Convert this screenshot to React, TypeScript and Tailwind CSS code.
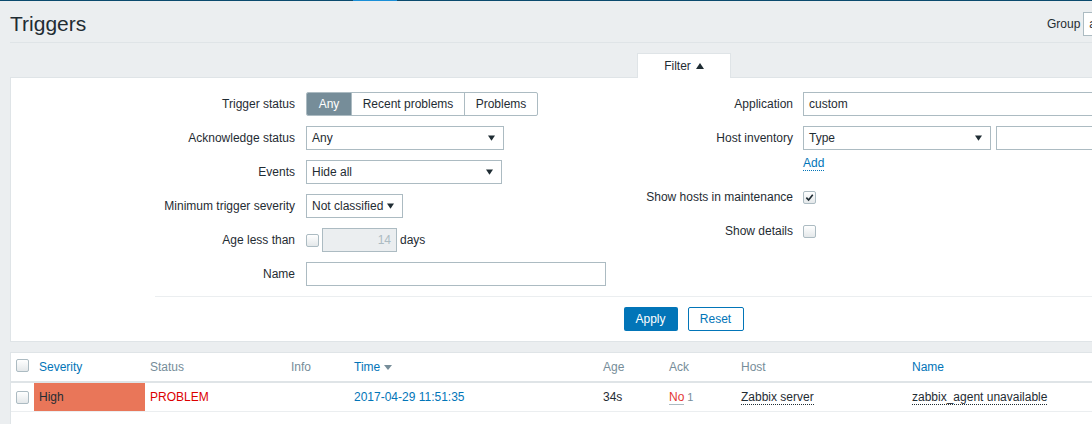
import React from "react";

function Checkbox({ checked = false }: { checked?: boolean }) {
  return (
    <span className="inline-flex h-[13px] w-[13px] items-center justify-center rounded-[2px] border border-[#acbbc2] bg-gradient-to-b from-[#ffffff] to-[#e4e8ea]">
      {checked && (
        <svg viewBox="0 0 10 10" className="h-[9px] w-[9px]">
          <path d="M1.5 5.2 L4 7.8 L8.6 2" fill="none" stroke="#1f2c33" strokeWidth="1.8" />
        </svg>
      )}
    </span>
  );
}

function Arrow() {
  return (
    <svg viewBox="0 0 8 6" className="h-[6px] w-[7px] shrink-0">
      <path d="M0 0 H8 L4 6 Z" fill="#1f2c33" />
    </svg>
  );
}

function Select({ value, width }: { value: string; width: string }) {
  return (
    <div className={`flex h-[24px] items-center justify-between border border-[#acbbc2] bg-white pl-[5px] pr-[8px] ${width}`}>
      <span>{value}</span>
      <Arrow />
    </div>
  );
}

function Row({ label, children }: { label: string; children: React.ReactNode }) {
  return (
    <div className="flex h-[34px] items-center">
      <div className="w-[285px] pr-[1px] text-right">{label}</div>
      <div className="ml-[10px] flex items-center">{children}</div>
    </div>
  );
}

function RRow({ label, children }: { label: string; children: React.ReactNode }) {
  return (
    <div className="flex h-[34px] items-center">
      <div className="w-[182px] text-right">{label}</div>
      <div className="ml-[10px] flex items-center">{children}</div>
    </div>
  );
}

export default function App() {
  return (
    <div className="h-[424px] w-[1092px] overflow-hidden bg-[#ebeef0] font-['Liberation_Sans',Arial,sans-serif] text-[12px] leading-[14px] text-[#1f2c33]">
      <div className="w-[1367px]">
        {/* top strip */}
        <div className="flex h-px bg-[#0a4a6e]">
          <div className="ml-[353px] w-[44px] bg-[#1a8fd8]" />
        </div>

        {/* header */}
        <div className="mx-[10px] flex h-[42px] items-center justify-between border-b border-[#dfe4e7] pt-[4px]">
          <h1 className="text-[21px] leading-[24px] text-[#1f2c33]">Triggers</h1>
          <div className="flex items-center">
            <span className="mr-[3px] text-[#1f2c33]">Group</span>
            <div className="flex h-[24px] w-[140px] items-center border border-[#acbbc2] bg-white px-[5px]">all</div>
            <span className="ml-[10px] mr-[3px]">Host</span>
            <div className="flex h-[24px] w-[96px] items-center border border-[#acbbc2] bg-white px-[5px]">all</div>
          </div>
        </div>

        {/* filter */}
        <div className="mx-[10px] mt-[10px]">
          <div className="flex justify-center">
            <div className="relative z-10 -mb-px flex h-[25px] w-[94px] items-center justify-center gap-[5px] border border-b-0 border-[#dfe4e7] bg-white pl-[1px]">
              <span>Filter</span>
              <svg viewBox="0 0 8 6" className="h-[6px] w-[8px]">
                <path d="M0 6 H8 L4 0 Z" fill="#1f2c33" />
              </svg>
            </div>
          </div>
          <div className="border border-[#dfe4e7] bg-white">
            <div className="flex pt-[9px] pb-[5px]">
              <div className="w-[600px]">
                <Row label="Trigger status">
                  <div className="flex h-[24px] overflow-hidden rounded-[2px] border border-[#acbbc2]">
                    <div className="flex w-[44px] items-center justify-center bg-[#768d99] text-white">Any</div>
                    <div className="flex w-[113px] items-center justify-center border-l border-[#acbbc2]">Recent problems</div>
                    <div className="flex w-[73px] items-center justify-center border-l border-[#acbbc2]">Problems</div>
                  </div>
                </Row>
                <Row label="Acknowledge status">
                  <Select value="Any" width="w-[198px]" />
                </Row>
                <Row label="Events">
                  <Select value="Hide all" width="w-[196px]" />
                </Row>
                <Row label="Minimum trigger severity">
                  <Select value="Not classified" width="w-[97px]" />
                </Row>
                <Row label="Age less than">
                  <Checkbox />
                  <div className="ml-[3px] flex h-[24px] w-[75px] items-center justify-end border border-[#acbbc2] bg-[#ebeef0] px-[5px] text-[#acbbc2]">14</div>
                  <span className="ml-[3px]">days</span>
                </Row>
                <Row label="Name">
                  <div className="h-[24px] w-[300px] border border-[#acbbc2] bg-white" />
                </Row>
              </div>
              <div className="flex-1">
                <RRow label="Application">
                  <div className="flex h-[24px] w-[300px] items-center border border-[#acbbc2] bg-white px-[5px]">custom</div>
                </RRow>
                <div className="flex h-[59px] items-start pt-[5px]">
                  <div className="flex h-[24px] w-[182px] items-center justify-end">Host inventory</div>
                  <div className="ml-[10px] flex flex-col">
                    <div className="flex">
                      <Select value="Type" width="w-[188px]" />
                      <div className="ml-[5px] h-[24px] w-[188px] border border-[#acbbc2] bg-white" />
                    </div>
                    <div className="mt-[6px]">
                      <span className="border-b border-dotted border-[#0275b8] text-[#0275b8]">Add</span>
                    </div>
                  </div>
                </div>
                <RRow label="Show hosts in maintenance">
                  <Checkbox checked />
                </RRow>
                <RRow label="Show details">
                  <Checkbox />
                </RRow>
              </div>
            </div>
            <div className="ml-[144px] border-t border-[#ebeef0]" />
            <div className="flex justify-center gap-[10px] py-[10px]">
              <div className="flex h-[24px] w-[54px] items-center justify-center rounded-[2px] bg-[#0275b8] text-white">Apply</div>
              <div className="flex h-[24px] w-[56px] items-center justify-center rounded-[2px] border border-[#0275b8] bg-white text-[#0275b8]">Reset</div>
            </div>
          </div>
        </div>

        {/* table */}
        <div className="mx-[10px] mt-[10px] border border-[#dfe4e7] bg-white pb-[40px]">
          <div className="flex h-[30px] items-center border-b-2 border-[#dfe4e7] pt-[1px] pb-[1px] text-[#768d99]">
            <div className="w-[23px] pl-[5px]"><Checkbox /></div>
            <div className="w-[111px] pl-[5px] text-[#0275b8]">Severity</div>
            <div className="w-[141px] pl-[5px]">Status</div>
            <div className="w-[63px] pl-[5px]">Info</div>
            <div className="flex w-[249px] items-center gap-[4px] pl-[5px] text-[#0275b8]">
              Time
              <svg viewBox="0 0 8 5" className="h-[5px] w-[8px]">
                <path d="M0 0 H8 L4 5 Z" fill="#768d99" />
              </svg>
            </div>
            <div className="w-[66px] pl-[5px]">Age</div>
            <div className="w-[72px] pl-[5px]">Ack</div>
            <div className="w-[171px] pl-[5px]">Host</div>
            <div className="flex-1 pl-[5px] text-[#0275b8]">Name</div>
          </div>
          <div className="flex h-[29px] items-stretch border-b border-[#ebeef0]">
            <div className="flex w-[23px] items-center pl-[5px]"><Checkbox /></div>
            <div className="flex w-[111px] items-center bg-[#e97659] pl-[5px]">High</div>
            <div className="flex w-[141px] items-center pl-[5px] text-[#dc0000]">PROBLEM</div>
            <div className="w-[63px]" />
            <div className="flex w-[249px] items-center pl-[5px] text-[#0275b8]">2017-04-29 11:51:35</div>
            <div className="flex w-[66px] items-center pl-[5px]">34s</div>
            <div className="flex w-[72px] items-center pl-[5px]">
              <span className="border-b border-[#acbbc2] text-[#e33734]">No</span>
              <span className="ml-[3px] text-[11px] text-[#768d99]">1</span>
            </div>
            <div className="flex w-[171px] items-center pl-[5px]">
              <span className="border-b border-dotted border-[#1f2c33]">Zabbix server</span>
            </div>
            <div className="flex flex-1 items-center pl-[5px]">
              <span className="border-b border-dotted border-[#1f2c33]">zabbix_agent unavailable</span>
            </div>
          </div>
        </div>
      </div>
    </div>
  );
}
